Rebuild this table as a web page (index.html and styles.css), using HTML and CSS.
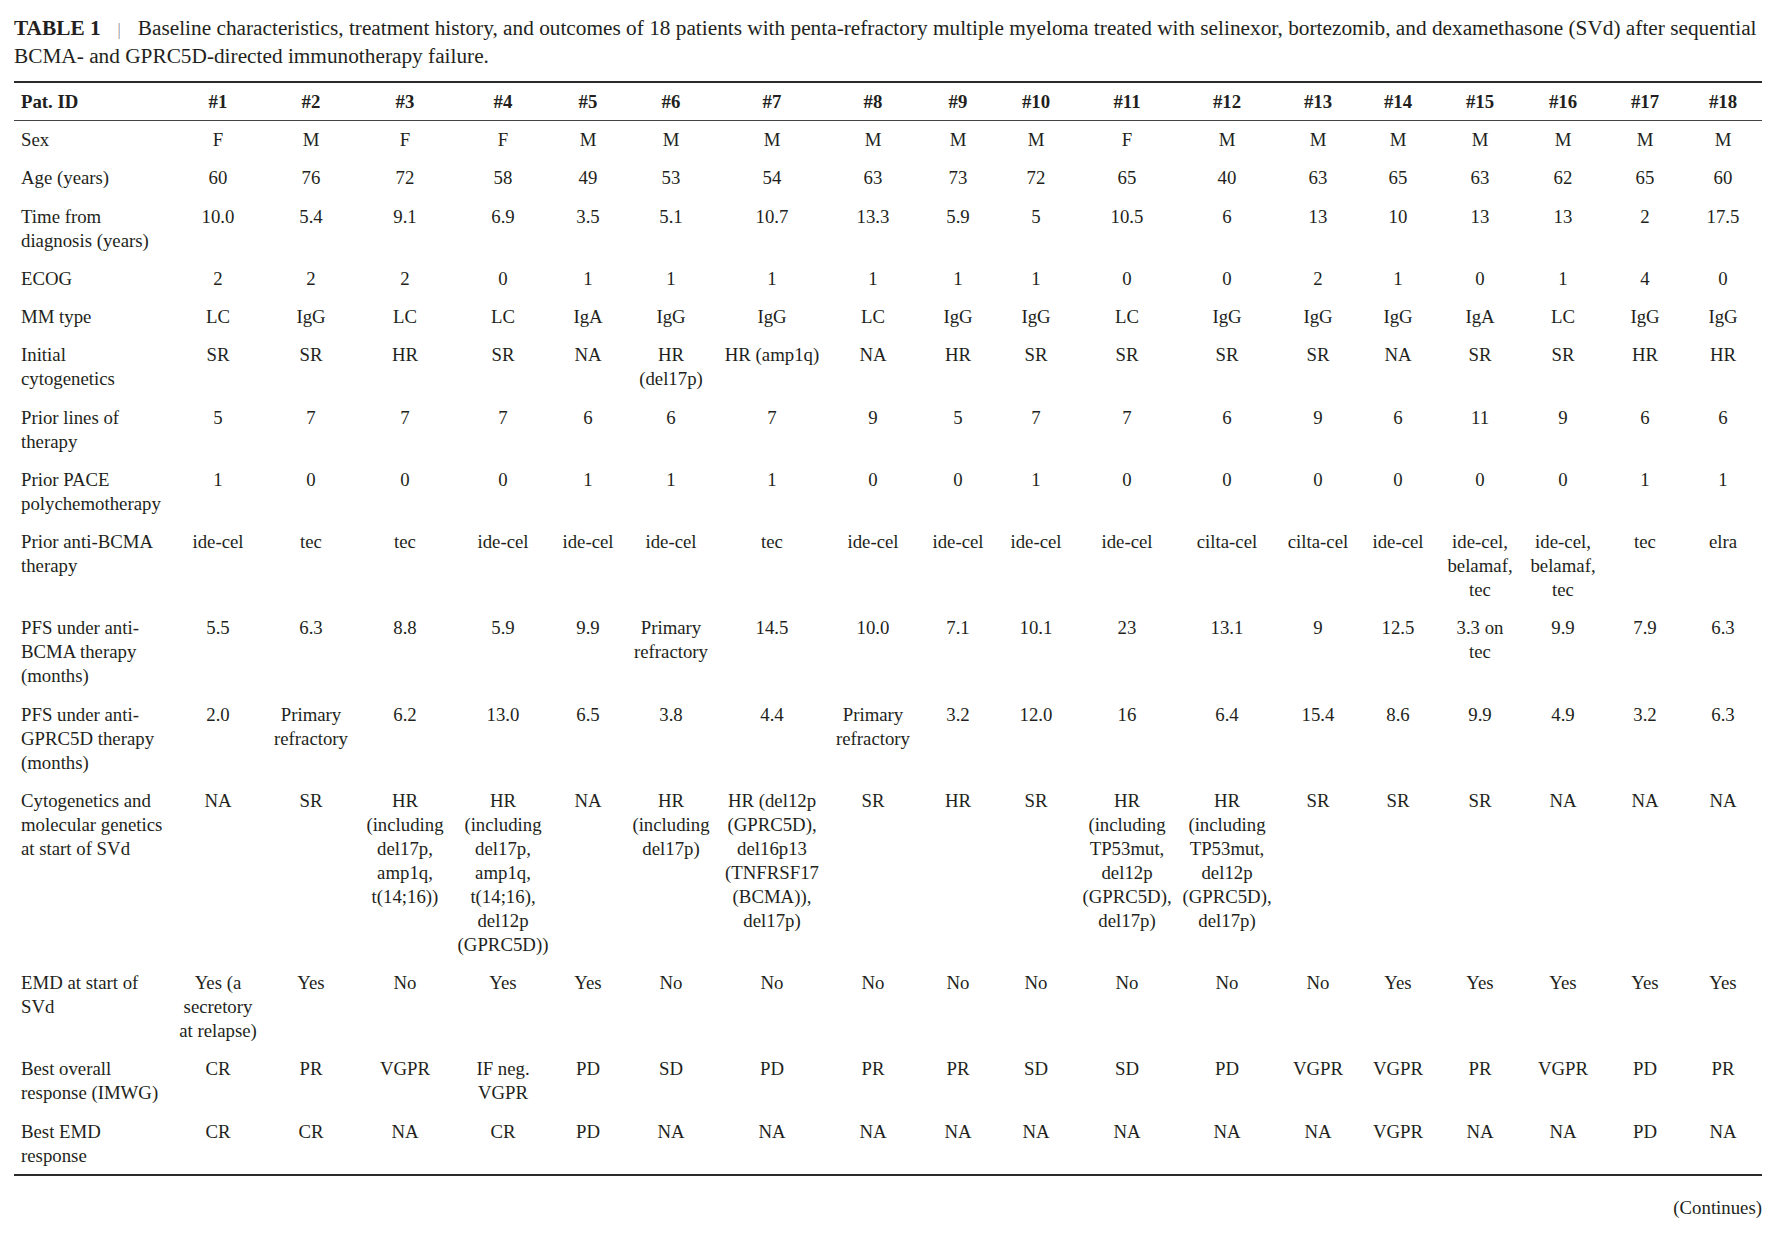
FILE: index.html
```html
<!DOCTYPE html>
<html lang="en">
<head>
<meta charset="utf-8">
<title>Table 1</title>
<link rel="stylesheet" href="styles.css">
</head>
<body>
<div class="page">
  <p class="caption"><span class="label">TABLE 1</span><span class="sep">|</span>Baseline characteristics, treatment history, and outcomes of 18 patients with penta-refractory multiple myeloma treated with selinexor, bortezomib, and dexamethasone (SVd) after sequential<br>BCMA- and GPRC5D-directed immunotherapy failure.</p>
  <table class="data">
    <colgroup>
      <col class="c-label">
      <col style="width:88px"><col style="width:98px"><col style="width:90px"><col style="width:106px"><col style="width:64px"><col style="width:102px"><col style="width:100px"><col style="width:102px"><col style="width:68px"><col style="width:88px"><col style="width:94px"><col style="width:106px"><col style="width:76px"><col style="width:84px"><col style="width:80px"><col style="width:86px"><col style="width:78px"><col style="width:78px">
    </colgroup>
    <thead>
      <tr><th>Pat. ID</th><th>#1</th><th>#2</th><th>#3</th><th>#4</th><th>#5</th><th>#6</th><th>#7</th><th>#8</th><th>#9</th><th>#10</th><th>#11</th><th>#12</th><th>#13</th><th>#14</th><th>#15</th><th>#16</th><th>#17</th><th>#18</th></tr>
    </thead>
    <tbody>
      <tr><td>Sex</td><td>F</td><td>M</td><td>F</td><td>F</td><td>M</td><td>M</td><td>M</td><td>M</td><td>M</td><td>M</td><td>F</td><td>M</td><td>M</td><td>M</td><td>M</td><td>M</td><td>M</td><td>M</td></tr>
      <tr><td>Age (years)</td><td>60</td><td>76</td><td>72</td><td>58</td><td>49</td><td>53</td><td>54</td><td>63</td><td>73</td><td>72</td><td>65</td><td>40</td><td>63</td><td>65</td><td>63</td><td>62</td><td>65</td><td>60</td></tr>
      <tr><td>Time from<br>diagnosis (years)</td><td>10.0</td><td>5.4</td><td>9.1</td><td>6.9</td><td>3.5</td><td>5.1</td><td>10.7</td><td>13.3</td><td>5.9</td><td>5</td><td>10.5</td><td>6</td><td>13</td><td>10</td><td>13</td><td>13</td><td>2</td><td>17.5</td></tr>
      <tr><td>ECOG</td><td>2</td><td>2</td><td>2</td><td>0</td><td>1</td><td>1</td><td>1</td><td>1</td><td>1</td><td>1</td><td>0</td><td>0</td><td>2</td><td>1</td><td>0</td><td>1</td><td>4</td><td>0</td></tr>
      <tr><td>MM type</td><td>LC</td><td>IgG</td><td>LC</td><td>LC</td><td>IgA</td><td>IgG</td><td>IgG</td><td>LC</td><td>IgG</td><td>IgG</td><td>LC</td><td>IgG</td><td>IgG</td><td>IgG</td><td>IgA</td><td>LC</td><td>IgG</td><td>IgG</td></tr>
      <tr><td>Initial<br>cytogenetics</td><td>SR</td><td>SR</td><td>HR</td><td>SR</td><td>NA</td><td>HR<br>(del17p)</td><td>HR (amp1q)</td><td>NA</td><td>HR</td><td>SR</td><td>SR</td><td>SR</td><td>SR</td><td>NA</td><td>SR</td><td>SR</td><td>HR</td><td>HR</td></tr>
      <tr><td>Prior lines of<br>therapy</td><td>5</td><td>7</td><td>7</td><td>7</td><td>6</td><td>6</td><td>7</td><td>9</td><td>5</td><td>7</td><td>7</td><td>6</td><td>9</td><td>6</td><td>11</td><td>9</td><td>6</td><td>6</td></tr>
      <tr><td>Prior PACE<br>polychemotherapy</td><td>1</td><td>0</td><td>0</td><td>0</td><td>1</td><td>1</td><td>1</td><td>0</td><td>0</td><td>1</td><td>0</td><td>0</td><td>0</td><td>0</td><td>0</td><td>0</td><td>1</td><td>1</td></tr>
      <tr><td>Prior anti-BCMA<br>therapy</td><td>ide-cel</td><td>tec</td><td>tec</td><td>ide-cel</td><td>ide-cel</td><td>ide-cel</td><td>tec</td><td>ide-cel</td><td>ide-cel</td><td>ide-cel</td><td>ide-cel</td><td>cilta-cel</td><td>cilta-cel</td><td>ide-cel</td><td>ide-cel,<br>belamaf,<br>tec</td><td>ide-cel,<br>belamaf,<br>tec</td><td>tec</td><td>elra</td></tr>
      <tr><td>PFS under anti-<br>BCMA therapy<br>(months)</td><td>5.5</td><td>6.3</td><td>8.8</td><td>5.9</td><td>9.9</td><td>Primary<br>refractory</td><td>14.5</td><td>10.0</td><td>7.1</td><td>10.1</td><td>23</td><td>13.1</td><td>9</td><td>12.5</td><td>3.3 on<br>tec</td><td>9.9</td><td>7.9</td><td>6.3</td></tr>
      <tr><td>PFS under anti-<br>GPRC5D therapy<br>(months)</td><td>2.0</td><td>Primary<br>refractory</td><td>6.2</td><td>13.0</td><td>6.5</td><td>3.8</td><td>4.4</td><td>Primary<br>refractory</td><td>3.2</td><td>12.0</td><td>16</td><td>6.4</td><td>15.4</td><td>8.6</td><td>9.9</td><td>4.9</td><td>3.2</td><td>6.3</td></tr>
      <tr><td>Cytogenetics and<br>molecular genetics<br>at start of SVd</td><td>NA</td><td>SR</td><td>HR<br>(including<br>del17p,<br>amp1q,<br>t(14;16))</td><td>HR<br>(including<br>del17p,<br>amp1q,<br>t(14;16),<br>del12p<br>(GPRC5D))</td><td>NA</td><td>HR<br>(including<br>del17p)</td><td>HR (del12p<br>(GPRC5D),<br>del16p13<br>(TNFRSF17<br>(BCMA)),<br>del17p)</td><td>SR</td><td>HR</td><td>SR</td><td>HR<br>(including<br>TP53mut,<br>del12p<br>(GPRC5D),<br>del17p)</td><td>HR<br>(including<br>TP53mut,<br>del12p<br>(GPRC5D),<br>del17p)</td><td>SR</td><td>SR</td><td>SR</td><td>NA</td><td>NA</td><td>NA</td></tr>
      <tr><td>EMD at start of<br>SVd</td><td>Yes (a<br>secretory<br>at relapse)</td><td>Yes</td><td>No</td><td>Yes</td><td>Yes</td><td>No</td><td>No</td><td>No</td><td>No</td><td>No</td><td>No</td><td>No</td><td>No</td><td>Yes</td><td>Yes</td><td>Yes</td><td>Yes</td><td>Yes</td></tr>
      <tr><td>Best overall<br>response (IMWG)</td><td>CR</td><td>PR</td><td>VGPR</td><td>IF neg.<br>VGPR</td><td>PD</td><td>SD</td><td>PD</td><td>PR</td><td>PR</td><td>SD</td><td>SD</td><td>PD</td><td>VGPR</td><td>VGPR</td><td>PR</td><td>VGPR</td><td>PD</td><td>PR</td></tr>
      <tr class="last"><td>Best EMD<br>response</td><td>CR</td><td>CR</td><td>NA</td><td>CR</td><td>PD</td><td>NA</td><td>NA</td><td>NA</td><td>NA</td><td>NA</td><td>NA</td><td>NA</td><td>NA</td><td>VGPR</td><td>NA</td><td>NA</td><td>PD</td><td>NA</td></tr>
    </tbody>
  </table>
  <p class="continues">(Continues)</p>
</div>
</body>
</html>
```

FILE: styles.css
```css
html, body {
  margin: 0;
  padding: 0;
  background: #ffffff;
}

.page {
  width: 1748px;
  margin-left: 14px;
  font-family: "Liberation Serif", "Times New Roman", serif;
  color: #231f20;
}

.caption {
  margin: 0;
  padding-top: 14px;
  font-size: 21.3px;
  line-height: 28px;
  white-space: nowrap;
}

.caption .label {
  font-weight: bold;
}

.caption .sep {
  color: #8a8a8a;
  font-size: 16px;
  line-height: 0;
  margin: 0 17px 0 17px;
}

.data {
  margin-top: 11px;
  width: 1748px;
  table-layout: fixed;
  border-collapse: collapse;
  border-top: 2px solid #2b2b2b;
  border-bottom: 2px solid #2b2b2b;
  font-size: 18.8px;
  line-height: 24px;
}

.data .c-label {
  width: 160px;
}

.data th,
.data td {
  padding: 7px 2px 7.25px;
  text-align: center;
  vertical-align: top;
  white-space: nowrap;
  font-weight: normal;
}

.data thead th {
  font-weight: bold;
  padding: 7px 2px 6px;
  border-bottom: 1px solid #444;
}

.data tr.last td {
  padding-bottom: 6px;
}

.data th:first-child,
.data td:first-child {
  text-align: left;
  padding-left: 7px;
}

.continues {
  margin: 20px 0 0 0;
  text-align: right;
  font-size: 18.8px;
  line-height: 24px;
}
```
